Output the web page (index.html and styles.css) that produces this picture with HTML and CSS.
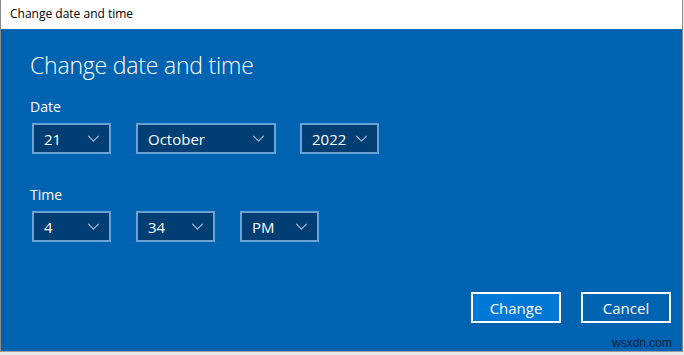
FILE: index.html
```html
<!DOCTYPE html>
<html lang="en">
  <head>
    <meta charset="UTF-8" />
    <title>Change date and time</title>
    <link rel="stylesheet" href="styles.css">
  </head>
  <body>
    <div class="window">
      <div class="titlebar">Change date and time</div>

      <div class="content">
        <h1>Change date and time</h1>

        <div class="field">
          <label>Date</label>
          <div class="row">
            <div class="combo small"><span>21</span><svg viewBox="0 0 14 8"><polyline points="1,1 7,7 13,1" /></svg></div>
            <div class="combo wide"><span>October</span><svg viewBox="0 0 14 8"><polyline points="1,1 7,7 13,1" /></svg></div>
            <div class="combo small"><span>2022</span><svg viewBox="0 0 14 8"><polyline points="1,1 7,7 13,1" /></svg></div>
          </div>
        </div>

        <div class="field time">
          <label>Time</label>
          <div class="row">
            <div class="combo small"><span>4</span><svg viewBox="0 0 14 8"><polyline points="1,1 7,7 13,1" /></svg></div>
            <div class="combo small"><span>34</span><svg viewBox="0 0 14 8"><polyline points="1,1 7,7 13,1" /></svg></div>
            <div class="combo small"><span>PM</span><svg viewBox="0 0 14 8"><polyline points="1,1 7,7 13,1" /></svg></div>
          </div>
        </div>

        <div class="buttons">
          <button class="primary">Change</button>
          <button>Cancel</button>
        </div>

        <div class="watermark">wsxdn.com</div>
      </div>
    </div>
  </body>
</html>
```

FILE: styles.css
```css
body {
  margin: 0;
  width: 684px;
  height: 355px;
  overflow: hidden;
  background-color: #e9e9e9;
  font-family: "Open Sans", "Noto Sans", sans-serif;
}
.window {
  width: 681px;
  height: 351px;
  border-left: 1px solid #8a8a8a;
  border-right: 1px solid #8a8a8a;
  border-bottom: 1px solid #9a9a9a;
  display: flex;
  flex-direction: column;
}
.titlebar {
  height: 29px;
  background: white;
  font-size: 12px;
  color: #000;
  line-height: 28px;
  padding-left: 9px;
  box-sizing: border-box;
}
.content {
  flex: 1;
  background-color: #0063b1;
  color: white;
  padding: 0 0 0 29px;
  position: relative;
}
h1 {
  font-weight: 300;
  font-size: 23px;
  margin: 20px 0 0 0;
  line-height: 32px;
  letter-spacing: -0.2px;
}
.field {
  margin-top: 16px;
}
.field.time {
  margin-top: 31px;
}
label {
  display: block;
  font-size: 14px;
  line-height: 20px;
}
.row {
  display: flex;
  gap: 25px;
  margin-top: 6px;
  padding-left: 2px;
}
.combo {
  height: 31px;
  box-sizing: border-box;
  border: 2px solid #6aa2d4;
  background-color: #003e73;
  display: flex;
  align-items: center;
  justify-content: space-between;
  padding: 0 9px 0 10px;
  font-size: 15px;
}
.combo.small {
  width: 79px;
}
.combo.wide {
  width: 140px;
  margin-right: -1px;
}
.combo svg {
  width: 13px;
  height: 7px;
  fill: none;
  stroke: #a9c8e6;
  stroke-width: 1.2;
}
.buttons {
  display: flex;
  justify-content: flex-end;
  gap: 20px;
  margin-top: 50px;
  padding-right: 11px;
}
button {
  width: 90px;
  height: 31px;
  border: 2px solid white;
  background: transparent;
  color: white;
  font-family: "Open Sans", "Noto Sans", sans-serif;
  font-size: 15px;
  padding: 0;
}
button.primary {
  background-color: #0078d7;
}
.watermark {
  position: absolute;
  right: 10px;
  bottom: 1px;
  font-family: "Liberation Sans", Arial, sans-serif;
  font-size: 12px;
  color: #0a2240;
}
```
